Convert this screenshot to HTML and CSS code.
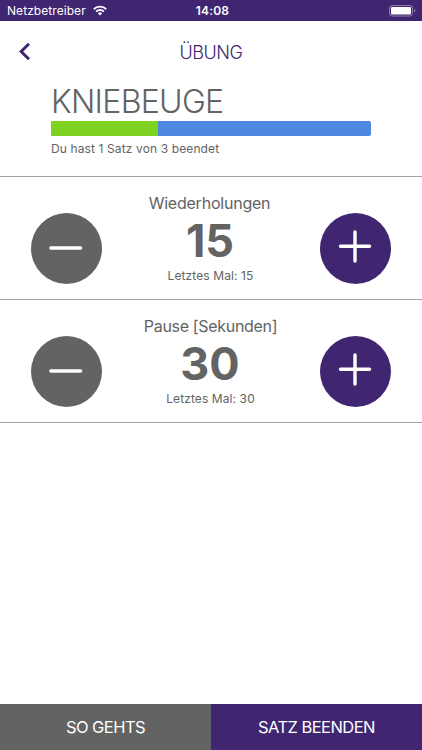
FILE: index.html
```
<!DOCTYPE html>
<html lang="de">
<head>
<meta charset="utf-8">
<title>Übung</title>
<link rel="stylesheet" href="styles.css">
</head>
<body>
<div class="status">
  <div class="carrier"><span>Netzbetreiber</span>
    <svg class="wifi" width="14" height="11" viewBox="0 0 14 11"><g fill="none" stroke="#fff" stroke-width="1.9"><path d="M.8 4.2a8.8 8.8 0 0 1 12.4 0"/><path d="M3.1 6.6a5.5 5.500 0 0 1 7.8 0"/></g><path fill="#fff" d="M7 10.5 4.900 8.300a3 3 0 0 1 4.200 0z"/></svg>
  </div>
  <time class="clock">14:08</time>
  <svg class="battery" width="27" height="12" viewBox="0 0 27 12"><rect x=".5" y=".5" width="23" height="10.5" rx="2.5" fill="none" stroke="#8f7fac"/><rect x="2" y="2" width="20" height="7.5" rx="1" fill="#fff"/><path d="M25 4v3.600q1.400-.5 1.400-1.800T25 4z" fill="#8f7fac"/></svg>
</div>
<header class="nav">
  <svg class="back" width="12" height="19" viewBox="0 0 12 19"><path d="M10 1.800 2.200 9.500l7.800 7.700" fill="none" stroke="#402670" stroke-width="3"/></svg>
  <h1>ÜBUNG</h1>
</header>
<section class="exercise">
  <h2>KNIEBEUGE</h2>
  <div class="progress"><div class="done"></div></div>
  <p>Du hast 1 Satz von 3 beendet</p>
</section>
<section class="row">
  <button class="round minus" aria-label="Weniger"><svg width="71" height="71" viewBox="0 0 71 71"><path d="M20 35h29.500" stroke="#fff" stroke-width="3.600" stroke-linecap="round"/></svg></button>
  <div class="value"><div class="label reps">Wiederholungen</div><div class="number">15</div><div class="last">Letztes Mal: 15</div></div>
  <button class="round plus" aria-label="Mehr"><svg width="71" height="71" viewBox="0 0 71 71"><path d="M20.500 33.200h29M35 19v29" stroke="#fff" stroke-width="3.400" stroke-linecap="round"/></svg></button>
</section>
<section class="row">
  <button class="round minus" aria-label="Weniger"><svg width="71" height="71" viewBox="0 0 71 71"><path d="M20 35h29.500" stroke="#fff" stroke-width="3.600" stroke-linecap="round"/></svg></button>
  <div class="value"><div class="label">Pause [Sekunden]</div><div class="number">30</div><div class="last">Letztes Mal: 30</div></div>
  <button class="round plus" aria-label="Mehr"><svg width="71" height="71" viewBox="0 0 71 71"><path d="M20.500 33.200h29M35 19v29" stroke="#fff" stroke-width="3.400" stroke-linecap="round"/></svg></button>
</section>
<footer class="actions">
  <button class="help">SO GEHTS</button>
  <button class="finish">SATZ BEENDEN</button>
</footer>
</body>
</html>
```
FILE: styles.css
```
* { box-sizing: border-box; }
body { margin: 0; height: 750px; display: flex; flex-direction: column; background: #fff; color: #636363; font-family: Inter, "Liberation Sans", sans-serif; overflow: hidden; }
h1, h2, p { margin: 0; font-weight: 400; }
button { border: 0; padding: 0; color: #fff; font-family: inherit; }
svg { display: block; }
.status { height: 21px; padding: 0 6px 0 7px; flex: none; display: grid; grid-template-columns: 1fr auto 1fr; align-items: center; background: #402670; color: #fff; font-size: 12px; line-height: 21px; }
.carrier { display: flex; align-items: center; gap: 7px; letter-spacing: .06px; }
.clock { font-weight: 600; letter-spacing: .2px; padding-left: 2px; }
.battery { justify-self: end; }
.nav { height: 61px; flex: none; display: grid; grid-template-columns: 40px 1fr 40px; align-items: center; color: #402670; }
.back { margin-left: 19px; }
h1 { text-align: center; font-size: 18px; line-height: 24px; font-weight: 300; letter-spacing: -.4px; padding-top: 2px; }
.exercise { height: 95px; flex: none; padding: 0 51px; border-bottom: 1px solid #a5a5a5; }
h2 { font-size: 32px; line-height: 39px; font-weight: 300; letter-spacing: -.7px; }
.progress { height: 15px; display: flex; border-radius: 2px; background: #4d8adf; overflow: hidden; }
.done { width: 33.33%; background: #7ed321; }
p { font-size: 12px; line-height: 26px; letter-spacing: .12px; }
.row { height: 123px; flex: none; padding: 0 31px; display: flex; justify-content: space-between; border-bottom: 1px solid #a5a5a5; }
.round { width: 71px; height: 71px; margin-top: 35.5px; flex: none; border-radius: 50%; }
.minus, .help { background: #636363; }
.plus, .finish { background: #402670; }
.value { text-align: center; padding: 16px 1px 0 0; white-space: nowrap; }
.label { font-size: 16px; line-height: 20px; letter-spacing: -.32px; }
.reps { letter-spacing: -.22px; padding-right: 2px; }
.number { font-size: 45px; line-height: 56px; font-weight: 700; padding-right: 1px; }
.last { font-size: 12px; line-height: 14px; letter-spacing: .1px; }
.actions { height: 46px; margin-top: auto; display: grid; grid-template-columns: 1fr 1fr; }
.actions button { font-size: 16.5px; letter-spacing: -.55px; }
```
